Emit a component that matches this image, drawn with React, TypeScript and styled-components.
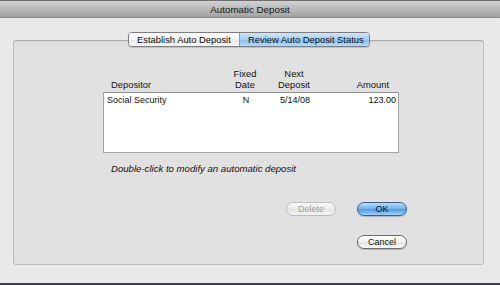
import React from "react";
import styled, { createGlobalStyle } from "styled-components";

const GlobalStyle = createGlobalStyle`
  html, body {
    margin: 0;
    padding: 0;
    background: #3b4150;
  }
  * {
    box-sizing: border-box;
  }
`;

const deposits = [
  { name: "Social Security", fixed: "N", next: "5/14/08", amount: "123.00" },
];

const App = () => {
  return (
    <>
      <GlobalStyle />
      <Window>
        <TitleBar>Automatic Deposit</TitleBar>
        <Body>
          <Tabs>
            <Tab>Establish Auto Deposit</Tab>
            <Tab active>Review Auto Deposit Status</Tab>
          </Tabs>
          <GroupBox>
            <Content>
              <ListHeader>
                <HeadCell>Depositor</HeadCell>
                <HeadCell align="center">
                  Fixed
                  <br />
                  Date
                </HeadCell>
                <HeadCell align="center">
                  Next
                  <br />
                  Deposit
                </HeadCell>
                <HeadCell align="right" pad={10}>
                  Amount
                </HeadCell>
              </ListHeader>
              <ListBox>
                {deposits.map((d, index) => (
                  <ListRow key={index}>
                    <Cell pad={0}>{d.name}</Cell>
                    <Cell align="center">{d.fixed}</Cell>
                    <Cell align="center">{d.next}</Cell>
                    <Cell align="right" pad={2}>
                      {d.amount}
                    </Cell>
                  </ListRow>
                ))}
              </ListBox>
              <Hint>Double-click to modify an automatic deposit</Hint>
              <ButtonGrid>
                <PushButton kind="disabled">Delete</PushButton>
                <PushButton kind="default">OK</PushButton>
                <span />
                <PushButton>Cancel</PushButton>
              </ButtonGrid>
            </Content>
          </GroupBox>
        </Body>
      </Window>
    </>
  );
};

const Window = styled.div`
  width: 500px;
  height: 285px;
  display: flex;
  flex-direction: column;
  background: #e9e9e9;
  font-family: "Liberation Sans", Arial, sans-serif;
  color: #111;
  border-bottom: 2px solid #3b4150;
  overflow: hidden;
`;

const TitleBar = styled.div`
  height: 18px;
  flex: none;
  display: flex;
  align-items: center;
  justify-content: center;
  font-size: 9.8px;
  color: #141414;
  background: linear-gradient(#d2d2d2, #b9b9b9 50%, #a2a2a2);
  border-top: 1px solid #6e6e6e;
  border-bottom: 1px solid #8a8a8a;
`;

const Body = styled.div`
  flex: 1;
  display: flex;
  flex-direction: column;
  padding: 14px 16px 18px 13px;
`;

const Tabs = styled.div`
  align-self: center;
  display: flex;
  height: 15px;
  margin-bottom: -7px;
  margin-right: -1px;
  position: relative;
  z-index: 1;
  border: 1px solid #7d7d7d;
  border-radius: 4px;
  overflow: hidden;
  box-shadow: 0 1px 1px rgba(0, 0, 0, 0.15);
`;

const Tab = styled.div<{ active?: boolean }>`
  display: flex;
  align-items: center;
  padding: 0 ${(p) => (p.active ? "5px 0 8px" : "6px 0 8px")};
  width: ${(p) => (p.active ? "130px" : "110px")};
  font-size: 9.4px;
  color: #0e0e0e;
  background: ${(p) =>
    p.active
      ? "linear-gradient(#cfe6fb, #a3cff5 50%, #85c0f1 55%, #b6dcfb)"
      : "linear-gradient(#ffffff, #f4f4f4 50%, #e8e8e8 55%, #f6f6f6)"};
  & + & {
    border-left: 1px solid #8d9db0;
  }
`;

const GroupBox = styled.div`
  flex: 1;
  background: #e1e1e1;
  border: 1px solid #bdbdbd;
  border-top-color: #acacac;
  border-radius: 3px;
  box-shadow: inset 0 1px 1px rgba(0, 0, 0, 0.06);
`;

const Content = styled.div`
  display: flex;
  flex-direction: column;
  align-items: flex-start;
  padding: 27px 0 0 89px;
`;

const columns = "1fr 40px 58px 76px";

const ListHeader = styled.div`
  width: 296px;
  display: grid;
  grid-template-columns: ${columns};
  align-items: end;
  padding-left: 8px;
  font-size: 9.4px;
  line-height: 11px;
`;

const HeadCell = styled.div<{ align?: string; pad?: number }>`
  text-align: ${(p) => p.align || "left"};
  padding-right: ${(p) => (p.pad ? p.pad : 0)}px;
`;

const ListBox = styled.div`
  width: 296px;
  height: 61px;
  margin-top: 2px;
  background: #ffffff;
  border: 1px solid #a5a5a5;
  border-top-color: #8f8f8f;
  padding: 2px 0 0 3px;
`;

const ListRow = styled.div`
  display: grid;
  grid-template-columns: 1fr 40px 58px 74px;
  font-size: 9px;
  line-height: 11px;
`;

const Cell = styled.div<{ align?: string; pad?: number }>`
  text-align: ${(p) => p.align || "left"};
  padding-right: ${(p) => (p.pad ? p.pad : 0)}px;
`;

const Hint = styled.div`
  margin: 10px 0 0 8px;
  font-size: 9.6px;
  line-height: 11px;
  font-style: italic;
`;

const ButtonGrid = styled.div`
  display: grid;
  grid-template-columns: 50px 50px;
  grid-template-rows: 14px 14px;
  column-gap: 21px;
  row-gap: 19px;
  margin: 28px 0 0 183px;
`;

const PushButton = styled.button<{ kind?: "default" | "disabled" }>`
  height: 14px;
  padding: 0;
  border-radius: 7px;
  font-family: "Liberation Sans", Arial, sans-serif;
  font-size: 9px;
  line-height: 12px;
  cursor: default;
  color: ${(p) => (p.kind === "disabled" ? "#a0a0a0" : "#0e0e0e")};
  border: 1px solid
    ${(p) =>
      p.kind === "default"
        ? "#35609e"
        : p.kind === "disabled"
        ? "#bdbdbd"
        : "#6a6a6a"};
  background: ${(p) =>
    p.kind === "default"
      ? "linear-gradient(#b9dcfa, #72b1ec 50%, #4f9ae6 55%, #9fd2fb)"
      : p.kind === "disabled"
      ? "linear-gradient(#f8f8f8, #ececec 50%, #e4e4e4 55%, #f2f2f2)"
      : "linear-gradient(#ffffff, #f1f1f1 50%, #e3e3e3 55%, #fafafa)"};
  box-shadow: ${(p) =>
    p.kind === "disabled" ? "none" : "0 1px 1px rgba(0, 0, 0, 0.2)"};
`;

export default App;
